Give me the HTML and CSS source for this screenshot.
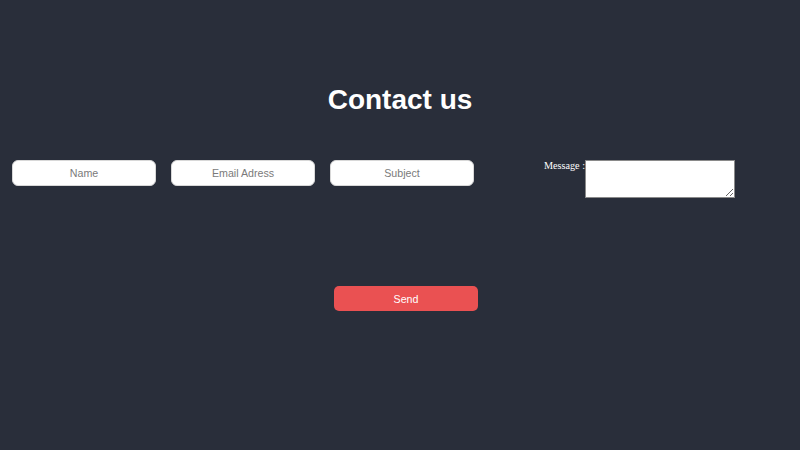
FILE: index.html
```html
<!DOCTYPE html>
<html>
<head>
<meta charset="utf-8">
<link rel="stylesheet" href="styles.css">
</head>
<body>
<main class="page">
  <h1 class="title">Contact us</h1>
  <form class="form">
    <div class="row">
      <input class="field" type="text" placeholder="Name">
      <input class="field" type="email" placeholder="Email Adress">
      <input class="field" type="text" placeholder="Subject">
      <div class="message">
        <label class="message-label">Message :</label>
        <textarea class="message-box"></textarea>
      </div>
    </div>
    <div class="actions">
      <button class="send" type="button">Send</button>
    </div>
  </form>
</main>
</body>
</html>
```

FILE: styles.css
```css
html, body {
  margin: 0;
  padding: 0;
  background: #292e3a;
  height: 100%;
}
.page {
  padding-top: 84px;
  font-family: "Liberation Sans", Arial, sans-serif;
}
.title {
  margin: 0;
  text-align: center;
  color: #ffffff;
  font-size: 28px;
  font-weight: bold;
  line-height: 32px;
}
.form {
  margin-top: 44px;
}
.row {
  display: flex;
  align-items: flex-start;
  padding-left: 12px;
  gap: 15px;
}
.field {
  box-sizing: border-box;
  width: 144px;
  height: 26px;
  border: 1px solid #d8d8d8;
  border-radius: 6px;
  background: #ffffff;
  text-align: center;
  font-family: "Liberation Sans", Arial, sans-serif;
  font-size: 10.67px;
  color: #333;
  padding: 0 6px;
  outline: none;
}
.field::placeholder {
  color: #7a7a7a;
}
.message {
  display: flex;
  align-items: flex-start;
  margin-left: 55px;
}
.message-label {
  width: 41px;
  white-space: nowrap;
  color: #ffffff;
  font-family: "Liberation Serif", "Times New Roman", serif;
  font-size: 10.2px;
  line-height: 10px;
  padding-top: 1px;
}
.message-box {
  position: relative;
  box-sizing: border-box;
  width: 150px;
  height: 38px;
  margin: 0;
  border: 1px solid #8a8a8a;
  background: #ffffff;
  padding: 2px;
}
.actions {
  padding-left: 334px;
  margin-top: 88px;
}
.send {
  width: 144px;
  height: 25px;
  border: none;
  border-radius: 5px;
  background: #ea5152;
  color: #ffffff;
  font-family: "Liberation Sans", Arial, sans-serif;
  font-size: 10.67px;
  padding: 0;
}
```
